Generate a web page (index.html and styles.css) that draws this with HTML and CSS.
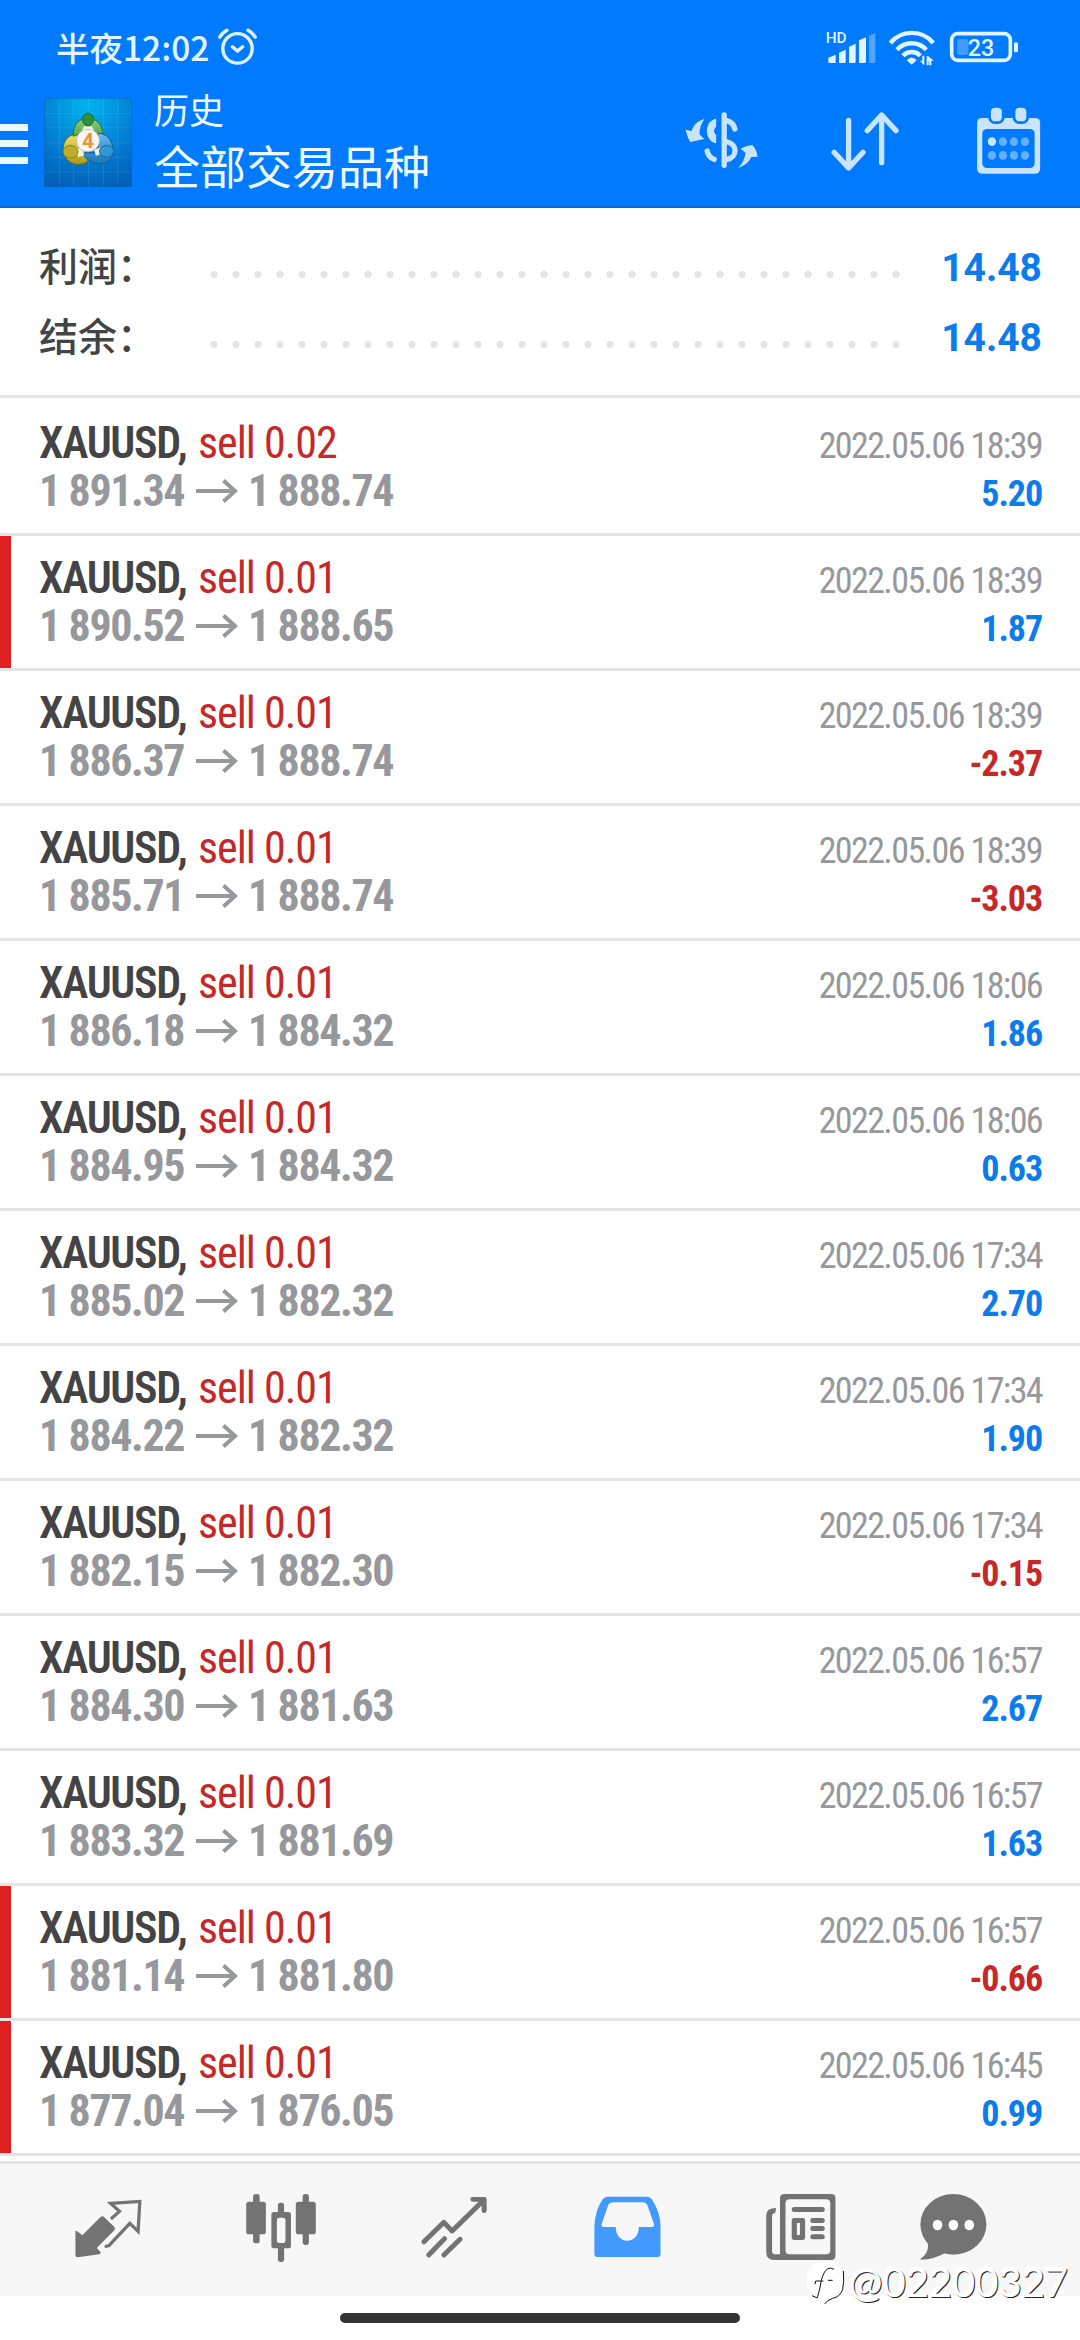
FILE: index.html
```html
<!DOCTYPE html>
<html lang="zh-CN">
<head>
<meta charset="utf-8">
<title>历史</title>
<link rel="stylesheet" href="styles.css">
</head>
<body>
<svg class="defs" width="0" height="0">
  <symbol id="arrow" viewBox="0 0 42 24"><path d="M0 12H38M27.500 1.500L39 12L27.500 22.500" fill="none" stroke="#97989b" stroke-width="4"/></symbol>
</svg>
<header class="header">
  <div class="status">
    <span class="clock">半夜12:02</span>
    <svg class="alarm" viewBox="630 84 120 112" preserveAspectRatio="none" fill="none" stroke="#dff3ff" stroke-width="10" stroke-linecap="round">
      <ellipse cx="690" cy="145" rx="43" ry="44"/>
      <path d="M675 140L690 153L705 140M638 111Q646 98 659 91M742 111Q734 98 721 91"/>
    </svg>
    <svg class="signals" viewBox="0 0 660 180">
      <text x="44" y="69" class="hd">HD</text>
      <g fill="#e2f4ff">
        <path d="M52 113L74 104V129H56Q52 129 52 125ZM84 98L104 89V125Q104 129 100 129H84ZM114 80L134 71V125Q134 129 130 129H114ZM144 61L165 52V125Q165 129 161 129H144Z"/>
        <path d="M174 47L193 38V125Q193 129 189 129H174Z" opacity=".36"/>
        <path d="M287 121Q302 104 317 121L302 134ZM327 122H334V107H340V134H338ZM347 136V108L352 109L368 122H361V136H355V122H353V136Z"/>
      </g>
      <g fill="none" stroke="#e2f4ff" stroke-width="13">
        <path d="M238 69A84 84 0 0 1 367 69M258 89A60 60 0 0 1 346 89M276 107A36 36 0 0 1 328 107"/>
        <rect x="422" y="41" width="176" height="80" rx="18" stroke-width="11"/>
      </g>
      <rect x="438" y="57" width="34" height="48" rx="8" fill="#4299ff"/>
      <rect x="609" y="67" width="12" height="30" rx="5" fill="#e2f4ff"/>
      <text x="470" y="108" class="battery">23</text>
    </svg>
  </div>
  <div class="toolbar">
    <div class="menu"><i></i><i></i><i></i></div>
    <svg class="logo" viewBox="44 98 88 91" preserveAspectRatio="none">
      <defs>
        <radialGradient id="sky" cx=".5" cy=".08" r=".95"><stop offset="0" stop-color="#00b4ee"/><stop offset=".5" stop-color="#0385d6"/><stop offset="1" stop-color="#0260b8"/></radialGradient>
        <linearGradient id="green" x2="0" y2="1"><stop offset="0" stop-color="#8dcf76"/><stop offset="1" stop-color="#2c8a32"/></linearGradient>
        <linearGradient id="gold" x2="0" y2="1"><stop offset="0" stop-color="#ece56a"/><stop offset="1" stop-color="#ab9a17"/></linearGradient>
        <linearGradient id="blue" x2="0" y2="1"><stop offset="0" stop-color="#65bdec"/><stop offset="1" stop-color="#1876b9"/></linearGradient>
      </defs>
      <rect x="44" y="98" width="88" height="91" fill="url(#sky)"/>
      <path d="M73.500 98V189M88.500 98V189M103.500 98V189M117.500 98V189M59.500 98V189M44 114H132M44 128.500H132M44 144H132M44 158.500H132M44 173.500H132" stroke="#fff" stroke-opacity=".09" fill="none"/>
      <path d="M64 155C61 142 69 134 81 134L88 163Q76 170 67 161Z" fill="url(#gold)" stroke="#6d6a18"/>
      <path d="M73 137C73 124 79 119 88 119S104 125 104 143L98 149L82 134Z" fill="url(#green)" stroke="#236a2e"/>
      <path d="M98 134C109 134 115 145 112 158C105 170 89 166 82 154L98 154Z" fill="url(#blue)" stroke="#145a94"/>
      <path d="M84 127H92L95 133H81ZM75 150L83 149L84 157L78 158ZM94 151L102 148V155L96 157Z" fill="#eef3df"/>
      <ellipse cx="88" cy="120" rx="5.500" ry="6.500" fill="#2f8d3d" stroke="#1f6b2b"/>
      <ellipse cx="70.500" cy="153" rx="7.500" ry="6.500" fill="#c0ac25" stroke="#8a7b18"/>
      <ellipse cx="106.500" cy="152.500" rx="7" ry="6" fill="#3198d8" stroke="#17679f"/>
      <circle cx="88" cy="141.500" r="11.500" fill="#f8f5f2" stroke="#b3a99e" stroke-width=".7"/>
      <text x="88" y="149" class="logo-number">4</text>
      <rect x="44.500" y="98.500" width="87" height="90" fill="none" stroke="#0562bb" stroke-opacity=".55"/>
    </svg>
    <div class="titles"><span class="subtitle">历史</span><span class="title">全部交易品种</span></div>
    <div class="actions">
      <svg class="icon" viewBox="22.500 -15 270 270" fill="#c9e4ff">
        <path d="M105 57C85 62 72 75 66 93L48 89Q54 112 62 126L104 117L90 103C90 85 95 70 105 57ZM206 203C225 198 240 185 245 171L264 170Q262 148 248 135Q228 137 213 146L228 158C225 180 215 195 206 203ZM140 56C103 62 103 122 140 130V105Q127 93 140 80Z"/>
        <path d="M164 45V196M172 62Q191 67 196 87M170 125C204 131 207 171 171 179M113 153Q117 172 134 178" fill="none" stroke="#c9e4ff" stroke-width="16" stroke-linecap="round"/>
      </svg>
      <svg class="icon" viewBox="813 285 261.400 270" preserveAspectRatio="none" fill="none" stroke="#c9e4ff" stroke-width="15.500" stroke-linecap="round" stroke-linejoin="round">
        <path d="M896 361V503M854 457L896 504L938 457M992 488V347M950 392L992 345L1034 392"/>
      </svg>
      <svg class="icon" viewBox="1228 285 261.400 270" preserveAspectRatio="none">
        <rect x="1269" y="354" width="183" height="167" rx="14" fill="#c9e4ff"/>
        <rect x="1284" y="387" width="152" height="117" rx="14" fill="#007aff"/>
        <g fill="#c9e4ff" stroke="#007aff" stroke-width="8"><rect x="1305" y="319" width="40" height="49" rx="16"/><rect x="1376" y="319" width="40" height="49" rx="16"/></g>
        <g fill="#65afff"><ellipse cx="1312" cy="425" rx="12" ry="13" fill="#c9e4ff"/><ellipse cx="1344" cy="425" rx="12" ry="13"/><ellipse cx="1376" cy="425" rx="12" ry="13"/><ellipse cx="1408" cy="425" rx="12" ry="13"/><ellipse cx="1312" cy="466" rx="12" ry="13"/><ellipse cx="1344" cy="466" rx="12" ry="13"/><ellipse cx="1376" cy="466" rx="12" ry="13"/><ellipse cx="1408" cy="466" rx="12" ry="13"/></g>
      </svg>
    </div>
  </div>
</header>
<section class="summary">
  <div class="total"><span class="label">利润：</span><span class="dots"></span><b>14.48</b></div>
  <div class="total"><span class="label">结余：</span><span class="dots"></span><b>14.48</b></div>
</section>
<main class="deals">
  <div class="deal">
    <div class="line"><span class="symbol">XAUUSD,</span><span class="side">sell 0.02</span><time>2022.05.06 18:39</time></div>
    <div class="line"><span class="price">1 891.34</span><svg class="to"><use href="#arrow"/></svg><span class="price">1 888.74</span><b class="profit">5.20</b></div>
  </div>
  <div class="deal marked">
    <div class="line"><span class="symbol">XAUUSD,</span><span class="side">sell 0.01</span><time>2022.05.06 18:39</time></div>
    <div class="line"><span class="price">1 890.52</span><svg class="to"><use href="#arrow"/></svg><span class="price">1 888.65</span><b class="profit">1.87</b></div>
  </div>
  <div class="deal">
    <div class="line"><span class="symbol">XAUUSD,</span><span class="side">sell 0.01</span><time>2022.05.06 18:39</time></div>
    <div class="line"><span class="price">1 886.37</span><svg class="to"><use href="#arrow"/></svg><span class="price">1 888.74</span><b class="profit loss">-2.37</b></div>
  </div>
  <div class="deal">
    <div class="line"><span class="symbol">XAUUSD,</span><span class="side">sell 0.01</span><time>2022.05.06 18:39</time></div>
    <div class="line"><span class="price">1 885.71</span><svg class="to"><use href="#arrow"/></svg><span class="price">1 888.74</span><b class="profit loss">-3.03</b></div>
  </div>
  <div class="deal">
    <div class="line"><span class="symbol">XAUUSD,</span><span class="side">sell 0.01</span><time>2022.05.06 18:06</time></div>
    <div class="line"><span class="price">1 886.18</span><svg class="to"><use href="#arrow"/></svg><span class="price">1 884.32</span><b class="profit">1.86</b></div>
  </div>
  <div class="deal">
    <div class="line"><span class="symbol">XAUUSD,</span><span class="side">sell 0.01</span><time>2022.05.06 18:06</time></div>
    <div class="line"><span class="price">1 884.95</span><svg class="to"><use href="#arrow"/></svg><span class="price">1 884.32</span><b class="profit">0.63</b></div>
  </div>
  <div class="deal">
    <div class="line"><span class="symbol">XAUUSD,</span><span class="side">sell 0.01</span><time>2022.05.06 17:34</time></div>
    <div class="line"><span class="price">1 885.02</span><svg class="to"><use href="#arrow"/></svg><span class="price">1 882.32</span><b class="profit">2.70</b></div>
  </div>
  <div class="deal">
    <div class="line"><span class="symbol">XAUUSD,</span><span class="side">sell 0.01</span><time>2022.05.06 17:34</time></div>
    <div class="line"><span class="price">1 884.22</span><svg class="to"><use href="#arrow"/></svg><span class="price">1 882.32</span><b class="profit">1.90</b></div>
  </div>
  <div class="deal">
    <div class="line"><span class="symbol">XAUUSD,</span><span class="side">sell 0.01</span><time>2022.05.06 17:34</time></div>
    <div class="line"><span class="price">1 882.15</span><svg class="to"><use href="#arrow"/></svg><span class="price">1 882.30</span><b class="profit loss">-0.15</b></div>
  </div>
  <div class="deal">
    <div class="line"><span class="symbol">XAUUSD,</span><span class="side">sell 0.01</span><time>2022.05.06 16:57</time></div>
    <div class="line"><span class="price">1 884.30</span><svg class="to"><use href="#arrow"/></svg><span class="price">1 881.63</span><b class="profit">2.67</b></div>
  </div>
  <div class="deal">
    <div class="line"><span class="symbol">XAUUSD,</span><span class="side">sell 0.01</span><time>2022.05.06 16:57</time></div>
    <div class="line"><span class="price">1 883.32</span><svg class="to"><use href="#arrow"/></svg><span class="price">1 881.69</span><b class="profit">1.63</b></div>
  </div>
  <div class="deal marked">
    <div class="line"><span class="symbol">XAUUSD,</span><span class="side">sell 0.01</span><time>2022.05.06 16:57</time></div>
    <div class="line"><span class="price">1 881.14</span><svg class="to"><use href="#arrow"/></svg><span class="price">1 881.80</span><b class="profit loss">-0.66</b></div>
  </div>
  <div class="deal marked">
    <div class="line"><span class="symbol">XAUUSD,</span><span class="side">sell 0.01</span><time>2022.05.06 16:45</time></div>
    <div class="line"><span class="price">1 877.04</span><svg class="to"><use href="#arrow"/></svg><span class="price">1 876.05</span><b class="profit">0.99</b></div>
  </div>
</main>
<nav class="tabs">
  <svg class="icon" viewBox="182.900 165 261.400 270" preserveAspectRatio="none">
    <path d="M219 303Q220 300 239 316L292 261Q297 256 302 261L332 291Q336 296 332 301L281 354L292 366Q294 371 288 373L226 382Q219 383 219 375Z" fill="#737373"/>
    <path d="M322 267L347 244L321 220L406 214L401 304L377 280L317 346Q313 350 304 348" fill="none" stroke="#737373" stroke-width="9.500"/>
  </svg>
  <svg class="icon" viewBox="685.300 165 261.400 270" preserveAspectRatio="none" fill="#737373">
    <rect x="715" y="215" width="57" height="98" rx="8"/><rect x="735" y="192" width="19" height="148" rx="8"/>
    <rect x="859" y="215" width="58" height="98" rx="8"/><rect x="879" y="192" width="18" height="153" rx="8"/>
    <rect x="807" y="218" width="18" height="40" rx="8"/><rect x="807" y="340" width="18" height="56" rx="8"/>
    <rect x="788" y="246" width="57" height="109" rx="8"/><rect x="804" y="263" width="25" height="76" rx="7" fill="#f7f7f7"/>
  </svg>
  <svg class="icon" viewBox="1187.700 165 261.400 270" preserveAspectRatio="none" fill="none" stroke="#737373" stroke-width="14.500" stroke-linecap="round" stroke-linejoin="round">
    <path d="M1231 335L1289 277L1313 303L1405 210M1373 208H1406V242M1245 375L1291 326M1289 375L1336 328"/>
  </svg>
  <svg class="icon" viewBox="122 165 261.400 270" preserveAspectRatio="none">
    <path d="M196 200H312Q319 200 325 208Q350 248 350 290V371Q350 381 340 381H168Q158 381 158 371V290Q160 240 182 208Q187 200 196 200ZM212 217Q202 217 198 226L179 282Q177 291 186 291H220C220 346 287 346 287 291H324Q333 291 331 282L312 226Q308 217 298 217Z" fill="#429aff" fill-rule="evenodd"/>
  </svg>
  <svg class="icon" viewBox="624.400 165 261.400 270" preserveAspectRatio="none" fill="#737373">
    <path d="M710 192H846Q858 192 858 204V377Q858 390 846 390H680Q657 390 657 366V256Q657 234 686 234L683 249Q674 249 674 260V362Q674 373 683 373H697V205Q697 192 710 192ZM725 208Q713 208 713 220V361Q713 373 725 373H831Q843 373 843 361V220Q843 208 831 208Z" fill-rule="evenodd"/>
    <rect x="731" y="231" width="96" height="15" rx="7.500"/>
    <path d="M738 264H763Q770 264 770 271V322Q770 330 763 330H738Q731 330 731 322V271Q731 264 738 264ZM746 279V315H755V279Z" fill-rule="evenodd"/>
    <rect x="785" y="264" width="42" height="15" rx="7.500"/><rect x="785" y="288" width="42" height="15" rx="7.500"/><rect x="785" y="313" width="42" height="15" rx="7.500"/>
  </svg>
  <svg class="icon" viewBox="1067.200 165 261.400 270" preserveAspectRatio="none" fill="#737373">
    <ellipse cx="1199" cy="283" rx="96" ry="91"/><path d="M1122 330Q1134 364 1104 386Q1101 389 1106 389Q1143 389 1180 366Z"/>
    <g fill="#fff"><ellipse cx="1153" cy="285" rx="14" ry="16"/><ellipse cx="1199" cy="285" rx="14" ry="16"/><ellipse cx="1245" cy="285" rx="14" ry="16"/></g>
  </svg>
</nav>
<div class="home"></div>
<div class="watermark">
  <svg viewBox="15 20 120 135"><path d="M75 25C120 25 131 45 131 80C131 115 118 128 98 132Q85 136 74 150L72 132C32 132 20 110 20 78S32 25 75 25Z" fill="#fff"/><path d="M130 50Q133 80 128 105Q120 128 98 132Q82 137 74 149M102 45Q92 38 82 44Q72 50 64 78Q60 105 52 130M45 90L47 80H70M84 78H98M36 124L52 131" fill="none" stroke="#111" stroke-width="3"/></svg>
  <span>@02200327</span>
</div>
</body>
</html>
```
FILE: styles.css
```css
* { box-sizing: border-box; }
body {
  margin: 0;
  width: 1080px;
  height: 2340px;
  overflow: hidden;
  position: relative;
  background: #fff;
  font-family: "Roboto Condensed", Roboto, "Noto Sans CJK SC", sans-serif;
  display: flex;
  flex-direction: column;
}
svg { display: block; flex: none; }
.defs { height: 0; }
.header { height: 208px; background: #007aff; border-bottom: 2px solid #0e6ad0; flex: none; }
.status { height: 78px; display: flex; padding: 20px 49px 0 56px; }
.clock {
  font: 500 33.5px/54px "Noto Sans CJK SC", sans-serif;
  color: #e4f5ff;
  width: 161px;
  white-space: nowrap;
}
.alarm { width: 41px; height: 37.500px; margin-top: 8px; }
.signals { width: 220px; height: 60px; margin-left: auto; }
.hd { font: 500 46px Roboto, sans-serif; fill: #e2f4ff; }
.battery { font: 500 70px Roboto, sans-serif; fill: #e2f4ff; }
.toolbar { height: 124px; display: flex; align-items: center; padding-right: 27px; }
.menu { width: 28px; display: flex; flex-direction: column; gap: 9.500px; padding-top: 7px; }
.menu i { height: 7px; background: #eaf8ff; }
.logo { width: 88px; height: 89px; margin: 4px 0 0 16px; }
.logo-number { font: 700 21px Roboto, sans-serif; fill: #ef923a; text-anchor: middle; }
.titles {
  display: flex;
  flex-direction: column;
  margin: 0 0 2px 22px;
  font-family: "Noto Sans CJK SC", sans-serif;
  color: #edfaff;
}
.subtitle { font-size: 35px; line-height: 50px; }
.title { font-size: 46px; line-height: 60px; }
.actions { margin-left: auto; display: flex; gap: 53px; }
.icon { width: 90px; height: 90px; }
.summary { height: 190px; flex: none; padding: 25px 38px 0 39px; border-bottom: 3px solid #e4e4e4; }
.total { display: flex; height: 70px; line-height: 70px; }
.label { width: 163.500px; font: 500 39px/62px "Noto Sans CJK SC", sans-serif; color: #444; }
.dots {
  width: 704px;
  height: 7px;
  margin-top: 38px;
  background: radial-gradient(circle at center, #e4e4e4 3.200px, transparent 3.800px) 0 0 / 22px 7px;
}
.total b { margin-left: auto; font: 700 39px/70px Roboto, sans-serif; color: #0c7bec; }
.deals { padding-top: 3px; height: 1763px; flex: none; }
.deal { height: 135px; padding: 18px 38px 0 39px; border-bottom: 3px solid #e4e4e4; }
.marked { background: linear-gradient(#e02020, #e02020) 0 0 / 11px 100% no-repeat; }
.line { display: flex; align-items: baseline; height: 48px; line-height: 48px; font-size: 44px; white-space: pre; }
.symbol { width: 159px; font-weight: 600; color: #444; letter-spacing: -1.300px; }
.side { color: #c62828; letter-spacing: -1px; }
.price { width: 145px; font-weight: 700; color: #97989b; letter-spacing: -1.400px; }
.to { width: 42px; height: 24px; margin: 0 10px 0 12px; align-self: center; }
.line time { margin-left: auto; font-size: 36px; color: #97989b; letter-spacing: -1.600px; }
.profit { margin-left: auto; font-size: 36px; font-weight: 700; color: #0c7bec; letter-spacing: -1.100px; }
.loss { color: #c62828; }
.tabs {
  height: 135px;
  flex: none;
  border-top: 3px solid #e4e4e4;
  background: #f7f7f7;
  padding-left: 21.500px;
  display: grid;
  grid-template-columns: repeat(5, 173px) 132px;
  align-items: center;
  justify-items: center;
}
.home { width: 400px; height: 10px; border-radius: 5px; background: #333; margin: 17px auto 0; flex: none; }
.watermark { position: absolute; left: 805px; top: 2255px; display: flex; }
.watermark svg { width: 40px; height: 45px; margin-top: 6px; }
.watermark span {
  margin-left: 4px;
  font: 400 40px/54px Lato, sans-serif;
  color: #fff;
  text-shadow: 1px 1px 0 #222, -1px -1px 1px #fff;
}
```
